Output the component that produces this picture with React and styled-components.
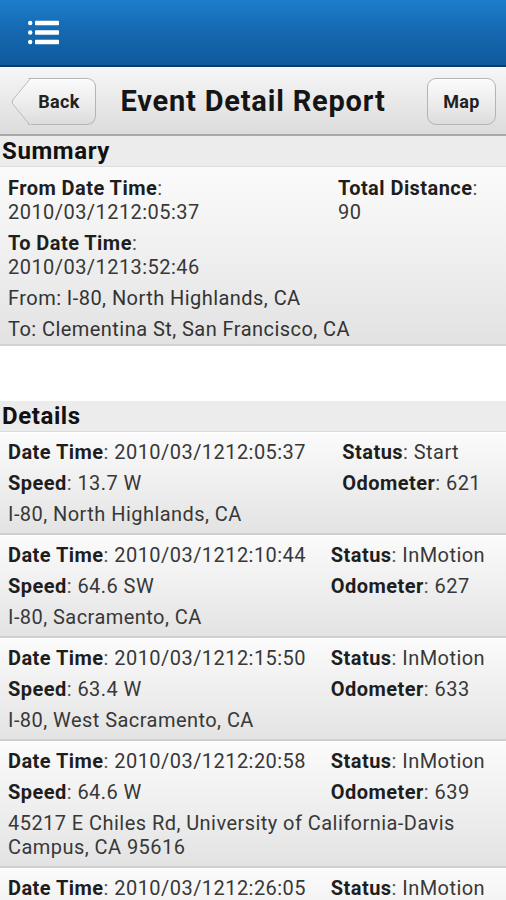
import React from "react";
import styled, { createGlobalStyle } from "styled-components";

const Global = createGlobalStyle`
  html, body { margin: 0; padding: 0; background: #fff; }
  body { font-family: Roboto, "Noto Sans", "Liberation Sans", sans-serif; width: 506px; overflow: hidden; }
  * { box-sizing: border-box; }
`;

const Page = styled.div`
  width: 506px;
  height: 900px;
  overflow: hidden;
  background: #fff;
`;

const AppBar = styled.div`
  height: 67px;
  background: linear-gradient(to bottom, #1c7ecb 0%, #1667b0 50%, #0f5a9c 100%);
  border-bottom: 2px solid #0b3d6c;
  display: flex;
  align-items: center;
  padding-left: 28px;
`;

const Toolbar = styled.div`
  height: 69px;
  background: linear-gradient(to bottom, #f6f6f6 0%, #e9e9e9 50%, #dcdcdc 100%);
  border-top: 1px solid #fff;
  border-bottom: 2px solid #a9a9a9;
  display: flex;
  align-items: center;
  justify-content: space-between;
  padding: 0 10px 0 12px;
  position: relative;
`;

const Title = styled.h1`
  margin: 0;
  font-size: 29px;
  font-weight: 700;
  color: #151515;
  position: absolute;
  left: 0;
  right: 0;
  text-align: center;
  pointer-events: none;
  letter-spacing: 0.8px;
`;

const BarButton = styled.div`
  position: relative;
  height: 47px;
  width: ${(p) => p.$w}px;
  margin-left: ${(p) => (p.$back ? 16 : 0)}px;
  display: flex;
  align-items: center;
  justify-content: center;
  padding-right: ${(p) => (p.$back ? 6 : 0)}px;
  border: 1px solid #b4b4b4;
  border-left-color: ${(p) => (p.$back ? "transparent" : "#b4b4b4")};
  border-radius: ${(p) => (p.$back ? "0 9px 9px 0" : "9px")};
  background: linear-gradient(to bottom, #fbfbfb 0%, #ececec 55%, #dcdcdc 100%);
  box-shadow: inset 0 1px 0 #fff;
  font-size: 18px;
  font-weight: 700;
  letter-spacing: 0.3px;
  color: #222;
  z-index: 1;

  ${(p) =>
    p.$back &&
    `
    &::before {
      content: "";
      position: absolute;
      width: 33px;
      height: 33px;
      left: -16.5px;
      top: 6px;
      transform: scaleX(0.82) rotate(45deg);
      border-left: 1.3px solid #b4b4b4;
      border-bottom: 1.3px solid #b4b4b4;
      border-bottom-left-radius: 5px;
      background: linear-gradient(135deg, #fbfbfb 0%, #ececec 55%, #dcdcdc 100%);
      z-index: -1;
    }
  `}
`;

const ButtonLabel = styled.span`
  position: relative;
  z-index: 2;
`;

const SectionHeader = styled.div`
  height: 31px;
  background: #ececec;
  border-bottom: 1px solid #dcdcdc;
  font-size: 24px;
  font-weight: 700;
  letter-spacing: 0.6px;
  color: #111;
  padding-left: 2px;
  line-height: 31px;
  margin-top: ${(p) => p.$mt || 0}px;
`;

const SummaryBody = styled.div`
  background: linear-gradient(to bottom, #fbfbfb 0%, #eeeeee 55%, #e2e2e2 100%);
  border-bottom: 2px solid #d2d2d2;
  padding: 9px 8px 3px 8px;
  display: grid;
  grid-template-columns: 330px 1fr;
  row-gap: 7px;
`;

const textStyle = `
  font-size: 20px;
  line-height: 24px;
  letter-spacing: 0.45px;
`;

const Pair = styled.div`
  display: flex;
  flex-direction: column;
  ${textStyle}
`;

const FullLine = styled.div`
  grid-column: 1 / -1;
  ${textStyle}
  color: #333;
`;

const Label = styled.span`
  font-weight: 700;
  color: #1e1e1e;
`;

const Colon = styled.span`
  color: #555;
`;

const Value = styled.span`
  color: #383838;
`;

const Row = styled.div`
  background: linear-gradient(to bottom, #fbfbfb 0%, #eeeeee 55%, #e3e3e3 100%);
  border-top: 1px solid #fff;
  border-bottom: 2px solid #cfcfcf;
  padding: 7px 8px 7px 8px;
`;

const RowTable = styled.table`
  width: 100%;
  border-collapse: collapse;
  ${textStyle}
  td {
    padding: 0 0 7px 0;
    white-space: nowrap;
    vertical-align: top;
  }
`;

const Address = styled.div`
  ${textStyle}
  color: #383838;
`;

const MenuIcon = () => (
  <svg width="31" height="25" viewBox="0 0 31 25">
    <g fill="#fff">
      <circle cx="2.2" cy="3" r="2.2" />
      <circle cx="2.2" cy="12.5" r="2.2" />
      <circle cx="2.2" cy="22" r="2.2" />
      <rect x="7" y="0.8" width="24" height="4.4" rx="0.8" />
      <rect x="7" y="10.3" width="24" height="4.4" rx="0.8" />
      <rect x="7" y="19.8" width="24" height="4.4" rx="0.8" />
    </g>
  </svg>
);

const Field = ({ label, value }) => (
  <>
    <Label>{label}</Label>
    <Colon>: </Colon>
    <Value>{value}</Value>
  </>
);

const events = [
  { dt: "2010/03/1212:05:37", status: "Start", speed: "13.7 W", odo: "621", addr: "I-80, North Highlands, CA" },
  { dt: "2010/03/1212:10:44", status: "InMotion", speed: "64.6 SW", odo: "627", addr: "I-80, Sacramento, CA" },
  { dt: "2010/03/1212:15:50", status: "InMotion", speed: "63.4 W", odo: "633", addr: "I-80, West Sacramento, CA" },
  { dt: "2010/03/1212:20:58", status: "InMotion", speed: "64.6 W", odo: "639", addr: "45217 E Chiles Rd, University of California-Davis Campus, CA 95616" },
  { dt: "2010/03/1212:26:05", status: "InMotion", speed: "64.4 W", odo: "645", addr: "I-80, Davis, CA" },
];

export default function App() {
  return (
    <Page>
      <Global />
      <AppBar>
        <MenuIcon />
      </AppBar>
      <Toolbar>
        <BarButton $back $w={68}>
          <ButtonLabel>Back</ButtonLabel>
        </BarButton>
        <Title>Event Detail Report</Title>
        <BarButton $w={69}>
          <ButtonLabel>Map</ButtonLabel>
        </BarButton>
      </Toolbar>

      <SectionHeader>Summary</SectionHeader>
      <SummaryBody>
        <Pair>
          <span>
            <Label>From Date Time</Label>
            <Colon>:</Colon>
          </span>
          <Value>2010/03/1212:05:37</Value>
        </Pair>
        <Pair>
          <span>
            <Label>Total Distance</Label>
            <Colon>:</Colon>
          </span>
          <Value>90</Value>
        </Pair>
        <Pair>
          <span>
            <Label>To Date Time</Label>
            <Colon>:</Colon>
          </span>
          <Value>2010/03/1213:52:46</Value>
        </Pair>
        <div />
        <FullLine>From: I-80, North Highlands, CA</FullLine>
        <FullLine>To: Clementina St, San Francisco, CA</FullLine>
      </SummaryBody>

      <SectionHeader $mt={55}>Details</SectionHeader>
      {events.map((e, i) => (
        <Row key={i}>
          <RowTable>
            <tbody>
              <tr>
                <td>
                  <Field label="Date Time" value={e.dt} />
                </td>
                <td>
                  <Field label="Status" value={e.status} />
                </td>
              </tr>
              <tr>
                <td>
                  <Field label="Speed" value={e.speed} />
                </td>
                <td>
                  <Field label="Odometer" value={e.odo} />
                </td>
              </tr>
            </tbody>
          </RowTable>
          <Address>{e.addr}</Address>
        </Row>
      ))}
    </Page>
  );
}
